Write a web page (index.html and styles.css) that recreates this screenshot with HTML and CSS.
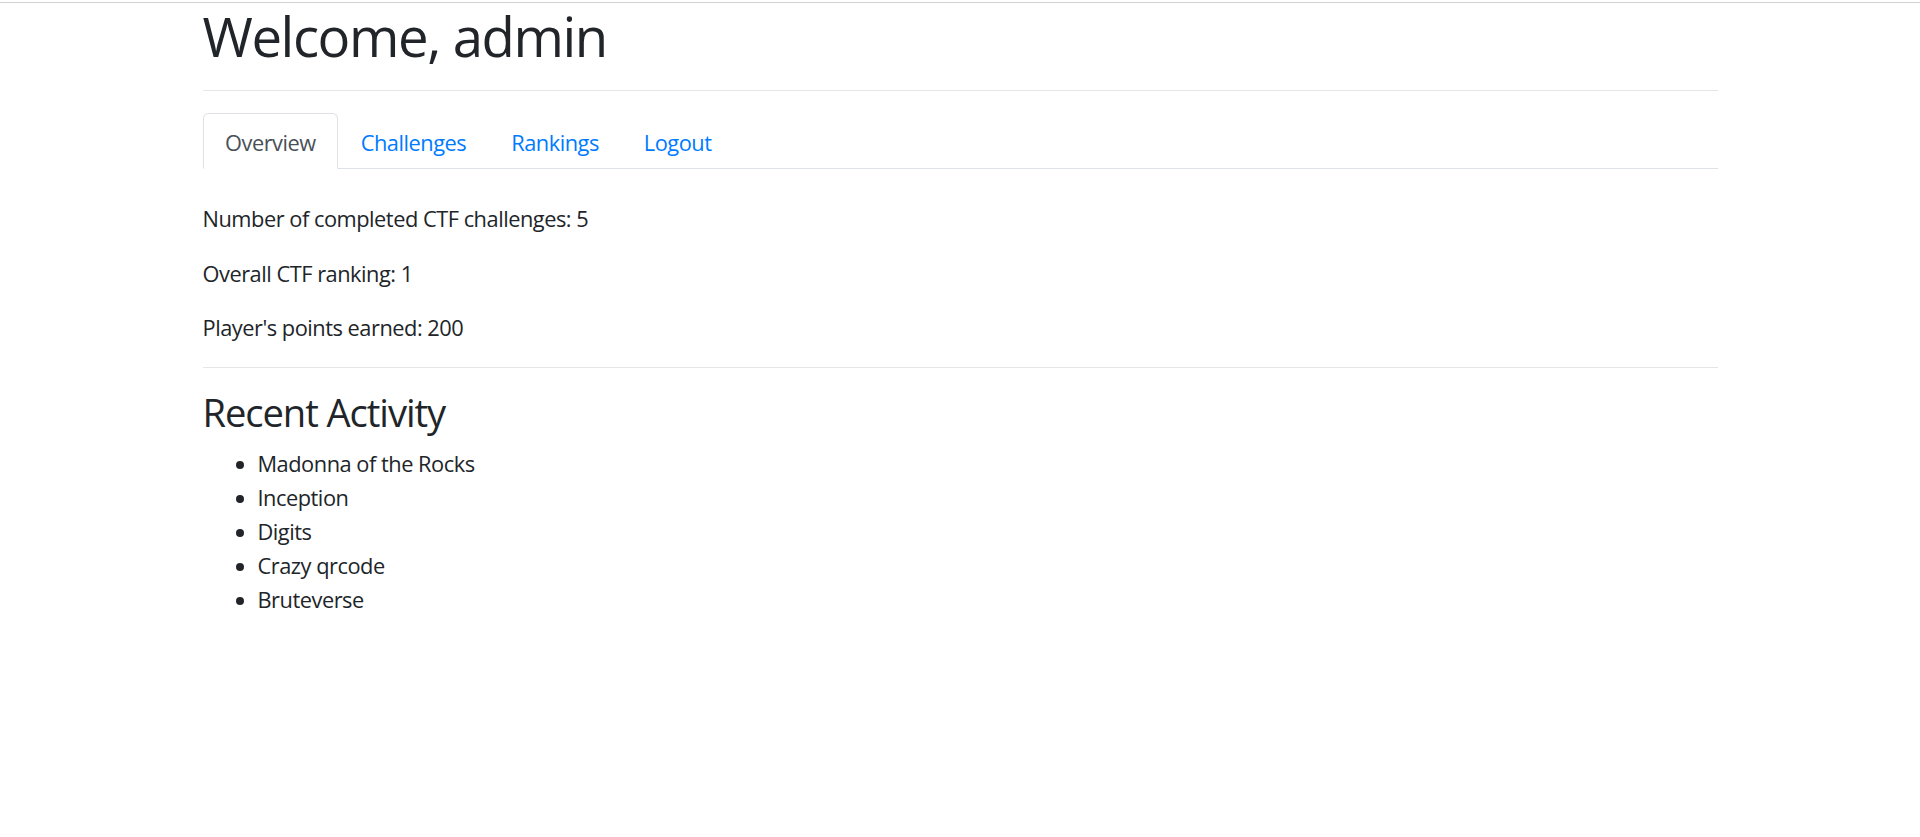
FILE: index.html
```html
<!DOCTYPE html>
<html lang="en">
<head>
<meta charset="utf-8">
<title>Welcome, admin</title>
<link rel="stylesheet" href="styles.css">
</head>
<body>
<div class="topline"></div>
<div class="container">
  <h1 class="title">Welcome, admin</h1>
  <hr class="rule">
  <ul class="tabs">
    <li class="tab-item"><a class="tab-link active" href="#">Overview</a></li>
    <li class="tab-item"><a class="tab-link" href="#">Challenges</a></li>
    <li class="tab-item"><a class="tab-link" href="#">Rankings</a></li>
    <li class="tab-item"><a class="tab-link" href="#">Logout</a></li>
  </ul>
  <div class="tab-content">
    <p class="stat">Number of completed CTF challenges: 5</p>
    <p class="stat">Overall CTF ranking: 1</p>
    <p class="stat">Player's points earned: 200</p>
  </div>
  <hr class="rule">
  <h3 class="section-title">Recent Activity</h3>
  <ul class="activity">
    <li>Madonna of the Rocks</li>
    <li>Inception</li>
    <li>Digits</li>
    <li>Crazy qrcode</li>
    <li>Bruteverse</li>
  </ul>
</div>
</body>
</html>
```
FILE: styles.css
```css
html, body {
  margin: 0;
  padding: 0;
  background: #fff;
}
body {
  font-family: "Open Sans", "Noto Sans", "Liberation Sans", sans-serif;
  font-size: 21.8px;
  line-height: 1.5;
  letter-spacing: -0.022em;
  color: #212529;
}
.topline {
  height: 1px;
  margin-top: 2px;
  background: #d2d2d2;
}
.container {
  width: 1515px;
  margin: 0 auto;
}
.title {
  margin: 0;
  padding-top: 1px;
  font-size: 54.5px;
  font-weight: 400;
  line-height: 1.2;
  letter-spacing: -0.026em;
}
.rule {
  margin: 21px 0 22px;
  border: 0;
  border-top: 1px solid #e6e6e6;
  height: 0;
}
.tabs {
  display: flex;
  margin: 0;
  padding: 0;
  list-style: none;
  border-bottom: 1px solid #dee2e6;
}
.tab-item {
  margin-bottom: -1px;
}
.tab-link {
  display: block;
  padding: 13px 21.5px 9px;
  line-height: 32px;
  border: 1px solid transparent;
  border-top-left-radius: 5.5px;
  border-top-right-radius: 5.5px;
  color: #007bff;
  text-decoration: none;
}
.tab-link.active {
  color: #495057;
  background: #fff;
  border-color: #dee2e6 #dee2e6 #fff;
}
.tab-content {
  padding-top: 34px;
}
.stat {
  margin: 0 0 21.8px;
}
.section-title {
  margin: 0 0 10.9px;
  font-size: 38.15px;
  font-weight: 400;
  line-height: 1.2;
  letter-spacing: -0.028em;
}
.activity {
  margin: 0 0 21.8px;
  padding-left: 55px;
  line-height: 34px;
}
```
